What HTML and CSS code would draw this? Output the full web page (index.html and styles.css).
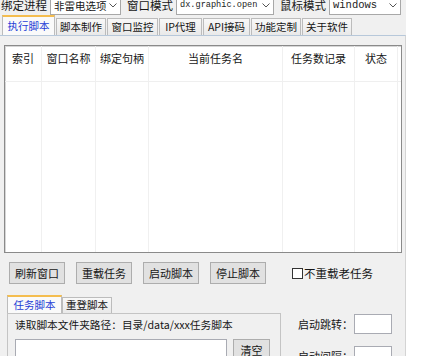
FILE: index.html
```html
<!DOCTYPE html>
<html lang="zh-CN">
<head>
    <meta charset="UTF-8">
    <title>执行脚本</title>
    <link rel="stylesheet" href="styles.css">
</head>
<body>
    <div class="window">
        <!-- riga superiore: processo e modalità -->
        <div class="topbar">
            <span class="lbl lbl-proc">绑定进程</span>
            <div class="combo combo-proc">
                <span>非雷电选项</span>
                <svg class="arrow" width="8" height="5" viewBox="0 0 8 5"><path d="M0.5 0.5 L4 4 L7.5 0.5" fill="none" stroke="#555" stroke-width="1"/></svg>
            </div>
            <span class="lbl lbl-mode">窗口模式</span>
            <div class="combo combo-mode">
                <span class="mono">dx.graphic.open</span>
                <svg class="arrow" width="8" height="5" viewBox="0 0 8 5"><path d="M0.5 0.5 L4 4 L7.5 0.5" fill="none" stroke="#555" stroke-width="1"/></svg>
            </div>
            <span class="lbl lbl-mouse">鼠标模式</span>
            <div class="combo combo-mouse">
                <span class="mono">windows</span>
                <svg class="arrow" width="8" height="5" viewBox="0 0 8 5"><path d="M0.5 0.5 L4 4 L7.5 0.5" fill="none" stroke="#555" stroke-width="1"/></svg>
            </div>
        </div>

        <!-- schede principali -->
        <div class="tabs">
            <div class="tab active t1">执行脚本</div>
            <div class="tab t2">脚本制作</div>
            <div class="tab t3">窗口监控</div>
            <div class="tab t4">IP代理</div>
            <div class="tab t5">API接码</div>
            <div class="tab t6">功能定制</div>
            <div class="tab t7">关于软件</div>
        </div>

        <div class="tab-panel">
            <!-- elenco finestre -->
            <div class="list">
                <div class="list-head">
                    <div class="col c1">索引</div>
                    <div class="col c2">窗口名称</div>
                    <div class="col c3">绑定句柄</div>
                    <div class="col c4">当前任务名</div>
                    <div class="col c5">任务数记录</div>
                    <div class="col c6">状态</div>
                    <div class="col c7"></div>
                </div>
                <div class="list-body">
                    <div class="col c1"></div>
                    <div class="col c2"></div>
                    <div class="col c3"></div>
                    <div class="col c4"></div>
                    <div class="col c5"></div>
                    <div class="col c6"></div>
                </div>
            </div>

            <!-- pulsanti -->
            <div class="actions">
                <button class="btn">刷新窗口</button>
                <button class="btn">重载任务</button>
                <button class="btn">启动脚本</button>
                <button class="btn">停止脚本</button>
                <label class="check"><span class="box"></span>不重载老任务</label>
            </div>

            <div class="lower">
                <div class="sub">
                    <div class="subtabs">
                        <div class="subtab active">任务脚本</div>
                        <div class="subtab">重登脚本</div>
                    </div>
                    <div class="subpanel">
                        <p class="path-label">读取脚本文件夹路径：目录/data/xxx任务脚本</p>
                        <div class="path-row">
                            <div class="input path"></div>
                            <button class="btn btn-clear">清空</button>
                        </div>
                    </div>
                </div>
                <div class="fields">
                    <div class="field">
                        <span>启动跳转：</span>
                        <div class="input small"></div>
                    </div>
                    <div class="field">
                        <span>启动间隔：</span>
                        <div class="input small"></div>
                    </div>
                </div>
            </div>
        </div>
    </div>
</body>
</html>
```

FILE: styles.css
```css
/* base */
body {
    margin: 0;
    background-color: #ffffff;
    font-family: "Noto Sans CJK SC", sans-serif;
    font-size: 11px;
    color: #161616;
}

.window {
    width: 406px;
    height: 356px;
    background-color: #f0f0f0;
    overflow: hidden;
}

/* riga superiore */
.topbar {
    display: flex;
    align-items: center;
    height: 20px;
    margin-top: -5px;
}

.lbl {
    white-space: nowrap;
    font-size: 11.5px;
}

.lbl-proc {
    margin-left: 1px;
}

.lbl-mode {
    margin-left: 6px;
}

.lbl-mouse {
    margin-left: 6px;
}

.combo {
    display: flex;
    align-items: center;
    justify-content: space-between;
    box-sizing: border-box;
    height: 19px;
    margin-left: 3px;
    padding: 0 3px 0 3px;
    white-space: nowrap;
    background-color: #ffffff;
    border: 1px solid #a8a8a8;
}

.combo-proc {
    width: 71px;
    font-size: 10.5px;
}

.combo-mode {
    width: 98px;
}

.combo-mouse {
    width: 72px;
}

.mono {
    font-family: "Liberation Mono", monospace;
    font-size: 8.6px;
    color: #222;
}

.combo-mouse .mono {
    font-size: 10.5px;
}

/* schede */
.tabs {
    display: flex;
    align-items: flex-end;
    height: 20px;
    margin-top: 0;
    padding-left: 2px;
}

.tab {
    box-sizing: border-box;
    height: 17px;
    margin-right: 1px;
    text-align: center;
    line-height: 15px;
    font-size: 10.5px;
    background: linear-gradient(#f8f8f8, #e9e9e9);
    border: 1px solid #bcbcbc;
    border-bottom: none;
}

.tab.active {
    height: 20px;
    line-height: 17px;
    color: #1f3ed6;
    background: #fafafa;
    border-top: 2px solid #f4bd4f;
}

.t1 { width: 53px; }
.t2 { width: 50px; }
.t3 { width: 51px; }
.t4 { width: 43px; }
.t5 { width: 47px; }
.t6 { width: 50px; }
.t7 { width: 50px; }

.tab-panel {
    height: 330px;
    border-top: 1px solid #b7c8da;
    border-right: 1px solid #d4d4d4;
}

/* elenco */
.list {
    box-sizing: border-box;
    width: 398px;
    height: 208px;
    margin: 9px 0 0 4px;
    background-color: #ffffff;
    border: 1px solid #8a8a8a;
    box-shadow: inset 1px 1px 0 #d6d6d6;
}

.list-head,
.list-body {
    display: flex;
}

.list-head {
    height: 35px;
    border-bottom: 1px solid #efefef;
}

.list-body {
    height: 170px;
}

.col {
    box-sizing: border-box;
    border-right: 1px solid #f0f0f0;
    text-align: center;
}

.list-head .col {
    padding-top: 4px;
    font-size: 11px;
}

.c1 { width: 37px; }
.c2 { width: 54px; }
.c3 { width: 53px; }
.c4 { width: 134px; }
.c5 { width: 72px; }
.c6 { width: 43px; }
.c7 { flex: 1; border-right: none; }

/* pulsanti */
.actions {
    display: flex;
    align-items: center;
    gap: 11px;
    margin-top: 9px;
    padding-left: 9px;
}

.btn {
    box-sizing: border-box;
    width: 56px;
    height: 22px;
    padding: 0;
    font-family: "Noto Sans CJK SC", sans-serif;
    font-size: 11px;
    color: #161616;
    background-color: #e1e1e1;
    border: 1px solid #adadad;
}

.check {
    display: flex;
    align-items: center;
    margin-left: 15px;
    font-size: 11.5px;
}

.box {
    box-sizing: border-box;
    width: 11px;
    height: 11px;
    margin-right: 1px;
    background-color: #ffffff;
    border: 1px solid #333333;
}

/* parte inferiore */
.lower {
    display: flex;
    margin-top: 11px;
}

.sub {
    margin-left: 7px;
}

.subtabs {
    display: flex;
    align-items: flex-end;
    height: 18px;
}

.subtab {
    box-sizing: border-box;
    width: 50px;
    height: 16px;
    line-height: 14px;
    text-align: center;
    font-size: 10.5px;
    background: linear-gradient(#f8f8f8, #e9e9e9);
    border: 1px solid #bcbcbc;
    border-bottom: none;
}

.subtab.active {
    width: 55px;
    height: 18px;
    line-height: 15px;
    color: #1f3ed6;
    background: #fafafa;
    border-top: 2px solid #f4bd4f;
}

.subpanel {
    box-sizing: border-box;
    width: 274px;
    height: 60px;
    padding: 3px 0 0 7px;
    border-top: 1px solid #c4c4c4;
    border-left: 1px solid #c4c4c4;
    border-right: 1px solid #c4c4c4;
}

.path-label {
    margin: 0;
    line-height: 16px;
    font-size: 10.7px;
}

.path-row {
    display: flex;
    gap: 6px;
    margin-top: 6px;
}

.input {
    box-sizing: border-box;
    background-color: #ffffff;
    border: 1px solid #a9abb3;
}

.path {
    width: 212px;
    height: 21px;
}

.btn-clear {
    width: 37px;
    height: 21px;
}

.fields {
    margin-left: 17px;
    padding-top: 19px;
}

.field {
    display: flex;
    align-items: center;
    height: 20px;
    margin-bottom: 12px;
    font-size: 11px;
}

.field span {
    width: 56px;
}

.small {
    width: 38px;
    height: 20px;
}
```
